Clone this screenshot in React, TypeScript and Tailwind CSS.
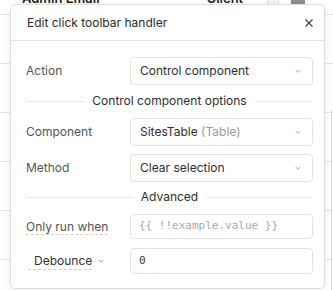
import React from 'react';

const Chevron: React.FC<{ className?: string }> = ({ className = '' }) => (
  <svg viewBox="0 0 10 10" className={`w-[8px] h-[8px] ${className}`} fill="none" stroke="currentColor" strokeWidth={1.3}>
    <path d="M2 3.5 L5 6.5 L8 3.5" />
  </svg>
);

const SelectBox: React.FC<{ children: React.ReactNode }> = ({ children }) => (
  <div className="flex items-center justify-between w-[183px] h-[28px] px-[9px] border border-[#e2e2e2] rounded-[4px] bg-white text-[#2e2e2e]">
    <span>{children}</span>
    <Chevron className="text-[#c4c4c4] mr-[1px]" />
  </div>
);

const Divider: React.FC<{ label: string }> = ({ label }) => (
  <div className="flex items-center gap-[8px] h-[16px]">
    <div className="flex-1 h-px bg-[#e6e6e6]" />
    <span className="text-[#2e2e2e]">{label}</span>
    <div className="flex-1 h-px bg-[#e6e6e6]" />
  </div>
);

const mono = { fontFamily: '"DejaVu Sans Mono", "Liberation Mono", monospace' };

const App: React.FC = () => {
  const rows = [0, 1, 2, 3, 4];
  return (
    <div className="relative w-[333px] h-[290px] overflow-hidden bg-white text-[12px]" style={{ fontFamily: 'Inter, "Liberation Sans", sans-serif' }}>
      {/* table behind the popover */}
      <div className="flex flex-col">
        <div className="flex items-start h-[15px] border-b border-[#e4e4e4] text-[#222] text-[13px] font-semibold">
          <span className="ml-[22px] -mt-[10px] leading-[16px]">Admin Email</span>
          <span className="ml-[107px] -mt-[10px] leading-[16px]">Client</span>
          <div className="ml-auto mr-[28px] flex items-start gap-[12px]">
            <div className="w-[12px] h-[5px] border border-t-0 border-[#ddd] bg-[#f4f4f4]" />
            <div className="w-[14px] h-[12px] bg-[#8f8f8f]" />
          </div>
        </div>
        {rows.map((r) => (
          <div key={r} className="h-[49px] border-b border-[#e4e4e4]" />
        ))}
      </div>
      <div className="absolute right-[1px] top-[110px] bottom-0 w-px bg-[#dcdcdc]" />

      {/* popover */}
      <div className="absolute left-[10px] top-[4px] w-[315px] h-[285px] bg-white border border-[#dedede] rounded-[5px] shadow-[0_2px_8px_rgba(0,0,0,0.08)] flex flex-col">
        <div className="flex items-center justify-between h-[36px] pl-[16px] pr-[10px] border-b border-[#e4e4e4]">
          <span className="text-[#2a2a2a]">Edit click toolbar handler</span>
          <svg viewBox="0 0 10 10" className="w-[10px] h-[10px] text-[#444]" fill="none" stroke="currentColor" strokeWidth={1.2}>
            <path d="M1.5 1.5 L8.5 8.5 M8.5 1.5 L1.5 8.5" />
          </svg>
        </div>
        <div className="flex flex-col pl-[15px] pr-[11px] pt-[16px]">
          <div className="flex items-center">
            <span className="w-[104px] text-[#555]">Action</span>
            <SelectBox>Control component</SelectBox>
          </div>
          <div className="mt-[8px]">
            <Divider label="Control component options" />
          </div>
          <div className="flex items-center mt-[9px]">
            <span className="w-[104px] text-[#555]">Component</span>
            <SelectBox>
              SitesTable <span className="text-[#9a9a9a]">(Table)</span>
            </SelectBox>
          </div>
          <div className="flex items-center mt-[8px]">
            <span className="w-[104px] text-[#555]">Method</span>
            <SelectBox>Clear selection</SelectBox>
          </div>
          <div className="mt-[7px]">
            <Divider label="Advanced" />
          </div>
          <div className="flex items-center mt-[9px]">
            <div className="w-[104px]">
              <span className="text-[#555] border-b border-dashed border-[#cfcfcf] leading-[16px]">Only run when</span>
            </div>
            <div className="flex items-center w-[183px] h-[25px] px-[8px] border border-[#e2e2e2] rounded-[4px] text-[#aaa] text-[11px]" style={mono}>
              {'{{ !!example.value }}'}
            </div>
          </div>
          <div className="flex items-center mt-[9px]">
            <div className="w-[104px] flex items-center gap-[5px] pl-[2px]">
              <span className="pl-[6px] text-[#333] border-b border-dashed border-[#cfcfcf] leading-[16px]">Debounce</span>
              <Chevron className="text-[#bdbdbd]" />
            </div>
            <div className="flex items-center w-[183px] h-[26px] px-[8px] border border-[#e2e2e2] rounded-[4px] text-[#333] text-[11px]" style={mono}>
              0
            </div>
          </div>
        </div>
      </div>
    </div>
  );
};

export default App;
